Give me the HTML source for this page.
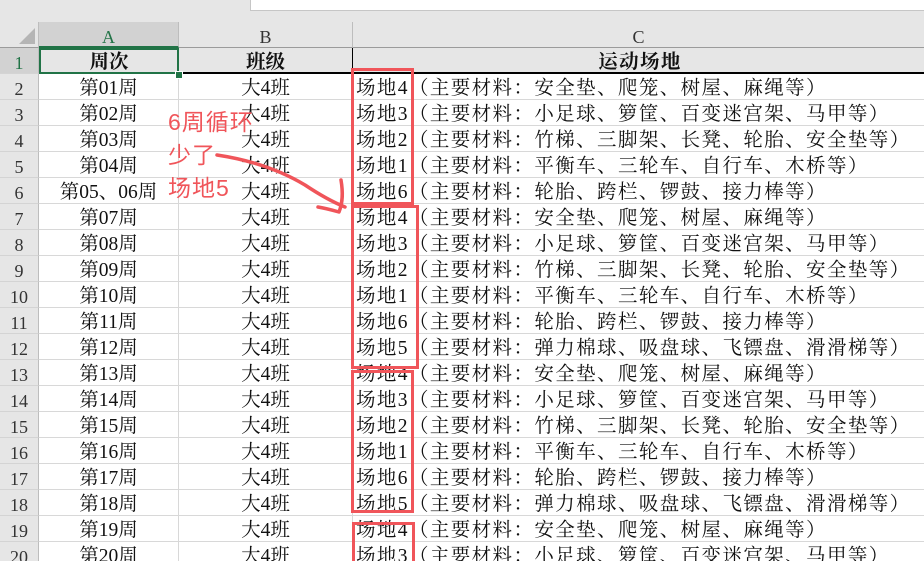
<!DOCTYPE html>
<html><head><meta charset="utf-8"><style>
html,body{margin:0;width:924px;height:561px;overflow:hidden;}
body{background:#e6e6e6;position:relative;font-family:"Liberation Serif","Noto Serif CJK SC",serif;}
.fb{position:absolute;left:250px;top:0;width:674px;height:10px;background:#fff;border-bottom:1px solid #c6c6c6;border-left:1px solid #c6c6c6;}
.r{position:absolute;left:0;width:924px;height:26px;}
.c{position:absolute;top:0;height:26px;line-height:26px;padding-top:2px;font-size:19.5px;box-sizing:border-box;white-space:nowrap;color:#111;}
.rh{left:0;width:39px;text-align:center;background:#e6e6e6;border-right:1px solid #bdbdbd;border-bottom:1px solid #d4d4d4;color:#333;font-size:18px;}
.a{left:39px;width:140px;text-align:center;border-right:1px solid #d8d8d8;border-bottom:1px solid #d8d8d8;background:#fff;}
.b{left:179px;width:174px;text-align:center;border-right:1px solid #d8d8d8;border-bottom:1px solid #d8d8d8;background:#fff;}
.cc{left:353px;width:571px;padding-left:3px;border-bottom:1px solid #d8d8d8;background:#fff;letter-spacing:1.4px;font-size:19.5px;}
.box{position:absolute;border:3px solid #f0555a;box-sizing:border-box;}
.ann{position:absolute;left:168px;color:#f0555a;font-family:"Liberation Sans","Noto Sans CJK SC",sans-serif;font-size:23px;line-height:24px;letter-spacing:1px;}
</style></head><body>
<div class="fb"></div>
<div class="r" style="top:22px">
<div class="c rh" style="background:#e6e6e6;border-bottom:1px solid #9b9b9b;"><div style="position:absolute;right:3px;bottom:3px;width:0;height:0;border-left:16px solid transparent;border-bottom:16px solid #b5b5b5"></div></div>
<div class="c" style="left:39px;width:140px;text-align:center;background:#d2d2d2;border-bottom:2px solid #217346;border-right:1px solid #bdbdbd;color:#217346;font-size:18px">A</div>
<div class="c" style="left:179px;width:174px;text-align:center;border-right:1px solid #bdbdbd;border-bottom:1px solid #9b9b9b;color:#333;font-size:18px">B</div>
<div class="c" style="left:353px;width:571px;text-align:center;border-bottom:1px solid #9b9b9b;color:#333;font-size:18px">C</div>
</div>
<div id="rows"></div>
<script>
var wk=["第01周","第02周","第03周","第04周","第05、06周","第07周","第08周","第09周","第10周","第11周","第12周","第13周","第14周","第15周","第16周","第17周","第18周","第19周","第20周"];
var M={4:"场地4（主要材料：安全垫、爬笼、树屋、麻绳等）",3:"场地3（主要材料：小足球、箩筐、百变迷宫架、马甲等）",2:"场地2（主要材料：竹梯、三脚架、长凳、轮胎、安全垫等）",1:"场地1（主要材料：平衡车、三轮车、自行车、木桥等）",6:"场地6（主要材料：轮胎、跨栏、锣鼓、接力棒等）",5:"场地5（主要材料：弹力棉球、吸盘球、飞镖盘、滑滑梯等）"};
var seq=[4,3,2,1,6,4,3,2,1,6,5,4,3,2,1,6,5,4,3];
var h='';
h+='<div class="r" style="top:48px"><div class="c rh" style="background:#d2d2d2;color:#217346">1</div><div class="c a" style="background:#e6e6e6;font-weight:bold;border:2px solid #217346;padding-top:0">周次</div><div class="c b" style="background:#e6e6e6;font-weight:bold;border-bottom:2px solid #000;border-right:1px solid #000">班级</div><div class="c cc" style="background:#e6e6e6;font-weight:bold;text-align:center;border-bottom:2px solid #000">运动场地</div></div>';
for(var i=0;i<19;i++){var t=48+26*(i+1);
h+='<div class="r" style="top:'+t+'px"><div class="c rh">'+(i+2)+'</div><div class="c a">'+wk[i]+'</div><div class="c b">大4班</div><div class="c cc">'+M[seq[i]]+'</div></div>';}
document.getElementById('rows').innerHTML=h;
</script>
<div style="position:absolute;left:175px;top:71px;width:6px;height:6px;background:#217346;border:1px solid #fff"></div>
<div class="box" style="left:351px;top:68px;width:63px;height:137px"></div>
<div class="box" style="left:351px;top:205px;width:68px;height:164px"></div>
<div class="box" style="left:351px;top:370px;width:63px;height:143px"></div>
<div class="box" style="left:352px;top:522px;width:63px;height:50px"></div>
<div class="ann" style="top:110px">6周循环</div>
<div class="ann" style="top:143px">少了</div>
<div class="ann" style="top:176px">场地5</div>
<svg style="position:absolute;left:0;top:0" width="924" height="561"><g fill="none" stroke="#f0555a" stroke-width="3.5" stroke-linecap="round" stroke-linejoin="round">
<path d="M217 155 C250 160 280 170 305 185 C320 195 335 203 345 207"/>
<path d="M341 180 C343 192 343 202 339 212 C332 210 324 208 318 207"/>
</g></svg>
</body></html>
